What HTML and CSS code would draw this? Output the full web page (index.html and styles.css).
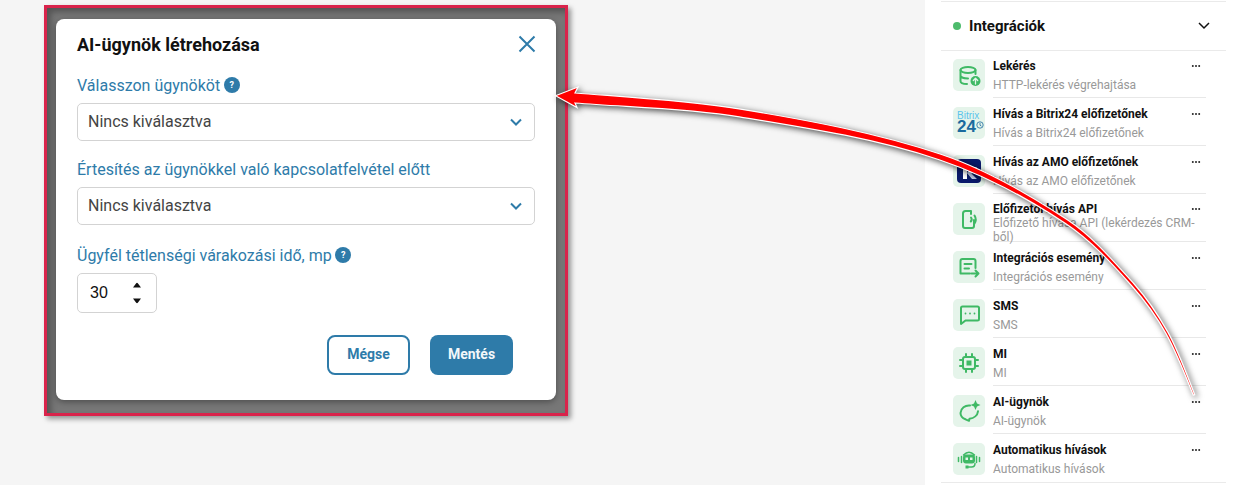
FILE: index.html
```html
<!DOCTYPE html>
<html lang="hu">
<head>
    <meta charset="UTF-8">
    <meta name="viewport" content="width=device-width, initial-scale=1.0">
    <title>AI-ügynök létrehozása</title>
    <link rel="stylesheet" href="styles.css">
</head>
<body>
    <div class="page">
        <main class="main">
            <div class="frame">
                <div class="modal">
                    <div class="modal-head">
                        <h2>AI-ügynök létrehozása</h2>
                        <svg class="close" viewBox="0 0 18 18"><path d="M1.5 1.5l15 15M16.5 1.5l-15 15"/></svg>
                    </div>
                    <div class="label label-first">Válasszon ügynököt <span class="help">?</span></div>
                    <div class="select">
                        <span>Nincs kiválasztva</span>
                        <svg class="select-arrow" viewBox="0 0 12 8"><path d="M1 1.5l5 5 5-5"/></svg>
                    </div>
                    <div class="label">Értesítés az ügynökkel való kapcsolatfelvétel előtt</div>
                    <div class="select">
                        <span>Nincs kiválasztva</span>
                        <svg class="select-arrow" viewBox="0 0 12 8"><path d="M1 1.5l5 5 5-5"/></svg>
                    </div>
                    <div class="label label-third">Ügyfél tétlenségi várakozási idő, mp <span class="help">?</span></div>
                    <div class="number">
                        <span>30</span>
                        <svg class="spin" viewBox="0 0 10 24"><path d="M1 6.500h8L5.800 2.200q-.8-.8-1.600 0zM1 17.500h8l-3.200 4.300q-.8.8-1.600 0z"/></svg>
                    </div>
                    <div class="buttons">
                        <button class="btn btn-outline">Mégse</button>
                        <button class="btn btn-fill">Mentés</button>
                    </div>
                </div>
            </div>
        </main>

        <aside class="panel">
            <div class="section">
                <div class="section-head">
                    <span class="dot"></span>
                    <span class="section-title">Integrációk</span>
                    <svg class="section-arrow" viewBox="0 0 12 8"><path d="M1 1l5 5 5-5"/></svg>
                </div>
                <div class="list">
                    <div class="row">
                        <div class="tile">
                            <svg class="ico" viewBox="0 0 32 32"><ellipse cx="15" cy="11" rx="7.500" ry="3"/><path d="M7.500 11v11c0 1.800 3 3 6.500 3M7.500 16.500c0 1.800 3.500 3 7.500 3M22.500 11v4"/><circle class="solid" cx="22.500" cy="22" r="5"/><path class="inv" d="M22.500 25v-5.500M20.300 21.500l2.200-2.200 2.200 2.200"/></svg>
                        </div>
                        <div class="row-body">
                            <div class="row-title"><span>Lekérés</span><i class="more"></i></div>
                            <div class="row-sub"><span>HTTP-lekérés végrehajtása</span></div>
                        </div>
                    </div>
                    <div class="row">
                        <div class="tile tile-bitrix">
                            <span class="bx-name">Bitrix</span>
                            <span class="bx-num">24<svg class="bx-clock" viewBox="0 0 8 8"><circle cx="4" cy="4" r="3.200"/><path d="M4 2v2.200l1.500 1"/></svg></span>
                        </div>
                        <div class="row-body">
                            <div class="row-title"><span>Hívás a Bitrix24 előfizetőnek</span><i class="more"></i></div>
                            <div class="row-sub"><span>Hívás a Bitrix24 előfizetőnek</span></div>
                        </div>
                    </div>
                    <div class="row">
                        <div class="tile">
                            <svg class="amo" viewBox="0 0 32 32"><rect x="4" y="4" width="24" height="24" rx="4" fill="#0a1a6b"/><path d="M10 13h4v11h-4z" fill="#fff"/><path d="M14 18l5-6h5l-5.500 6.500L24 24h-5z" fill="#c9d6f2"/></svg>
                        </div>
                        <div class="row-body">
                            <div class="row-title"><span>Hívás az AMO előfizetőnek</span><i class="more"></i></div>
                            <div class="row-sub"><span>Hívás az AMO előfizetőnek</span></div>
                        </div>
                    </div>
                    <div class="row">
                        <div class="tile">
                            <svg class="ico" viewBox="0 0 32 32"><path d="M12.500 8H18v3M21 17v6a2 2 0 0 1-2 2h-7a2 2 0 0 1-2-2V10.500A2.500 2.500 0 0 1 12.500 8"/><path d="M18 14.500q1.500 2-.2 4M21.500 12.500q2.500 4 0 8"/></svg>
                        </div>
                        <div class="row-body">
                            <div class="row-title"><span>Előfizetői hívás API</span><i class="more"></i></div>
                            <div class="row-sub"><span>Előfizető hívása API (lekérdezés CRM-ből)</span></div>
                        </div>
                    </div>
                    <div class="row">
                        <div class="tile">
                            <svg class="ico" viewBox="0 0 32 32"><path d="M17 22.500H7.500V10a2 2 0 0 1 2-2h11a2 2 0 0 1 2 2v7"/><path d="M11.500 13h7M11.500 17.500h4.500M18.500 22.500h7M22.500 19.500l3 3-3 3"/></svg>
                        </div>
                        <div class="row-body">
                            <div class="row-title"><span>Integrációs esemény</span><i class="more"></i></div>
                            <div class="row-sub"><span>Integrációs esemény</span></div>
                        </div>
                    </div>
                    <div class="row">
                        <div class="tile">
                            <svg class="ico" viewBox="0 0 32 32"><path d="M8 25V9a1.500 1.500 0 0 1 1.500-1.500h15A1.500 1.500 0 0 1 26 9v11a1.500 1.500 0 0 1-1.500 1.500H12.500L8 25z"/><path class="dots" d="M12.500 14.500h.01M17 14.500h.01M21.500 14.500h.01"/></svg>
                        </div>
                        <div class="row-body">
                            <div class="row-title"><span>SMS</span><i class="more"></i></div>
                            <div class="row-sub"><span>SMS</span></div>
                        </div>
                    </div>
                    <div class="row">
                        <div class="tile">
                            <svg class="ico" viewBox="0 0 32 32"><rect x="10" y="10" width="12" height="12" rx="2"/><rect class="solid" x="13.500" y="13.500" width="5" height="5"/><path d="M13 7v3M19 7v3M13 22v3M19 22v3M7 13h3M7 19h3M22 13h3M22 19h3"/></svg>
                        </div>
                        <div class="row-body">
                            <div class="row-title"><span>MI</span><i class="more"></i></div>
                            <div class="row-sub"><span>MI</span></div>
                        </div>
                    </div>
                    <div class="row">
                        <div class="tile">
                            <svg class="ico" viewBox="0 0 32 32"><path d="M17 10.500A8.500 8 0 0 0 7.500 18c0 3 2.500 5.300 5 6.300l3.500 1.500.5-2c4.500-.5 8-3.500 8.500-7.500"/><path class="solid" d="M22.500 5l1.500 3.500 3.500 1.500-3.500 1.500-1.500 3.500-1.500-3.500-3.500-1.500 3.500-1.500z"/></svg>
                        </div>
                        <div class="row-body">
                            <div class="row-title"><span>AI-ügynök</span><i class="more"></i></div>
                            <div class="row-sub"><span>AI-ügynök</span></div>
                        </div>
                    </div>
                    <div class="row">
                        <div class="tile">
                            <svg class="ico ico-thin" viewBox="0 0 32 32"><path d="M10.500 12q5.500-5.500 11 0M8.500 13.500v6M5.500 14.500v4M23.500 13.500v6M26.500 14.500v4M22 20.500q0 3.500-3.500 3.500H15"/><rect class="solid" x="10" y="11.500" width="12" height="9" rx="3"/><path class="eyes" d="M12.500 14.500h2.500v2.500h-2.500zM17 14.500h2.500v2.500H17z"/><path class="solid" d="M12.500 22.500h3v3h-3z"/></svg>
                        </div>
                        <div class="row-body">
                            <div class="row-title"><span>Automatikus hívások</span><i class="more"></i></div>
                            <div class="row-sub"><span>Automatikus hívások</span></div>
                        </div>
                    </div>
                </div>
            </div>
        </aside>

        <svg class="arrow" viewBox="0 0 1242 485">
            <path d="M555.500 95.700L578 87L575 93C628.800 97.300 687.300 100.500 740.600 109.200C807.700 120.100 876.400 132.800 940.900 154.300C986.500 169.500 1028.100 193.800 1068.100 220.300C1093.100 236.900 1113.900 261.800 1134.200 284C1147.600 299 1158.200 315 1168 332.400C1178.700 351.700 1186.600 374.200 1194.700 394.700L1193.300 395.300C1185.200 374.800 1176.700 352.900 1166 333.600C1156.300 316.100 1145.200 301 1131.800 286C1111.900 263.600 1090.900 240.300 1065.900 223.700C1025.900 197.200 984.700 174.900 939.100 159.700C874.600 138.200 806.500 127.700 739.400 116.800C686.100 108.100 628.800 107.300 575 103L577 107.500Z"/>
        </svg>
    </div>
</body>
</html>
```

FILE: styles.css
```css
* {
    box-sizing: border-box;
}
html, body {
    margin: 0;
    height: 485px;
    overflow: hidden;
}
body {
    font-family: Roboto, "Liberation Sans", sans-serif;
    background-color: #f5f5f5;
}
.page {
    position: relative;
    display: flex;
    height: 485px;
}
.main {
    flex: 1;
    padding: 5px 0 0 44px;
}
.frame {
    width: 524px;
    height: 411px;
    padding: 11px 9px 13px;
    background-color: #777;
    border: 3px solid #d9234b;
    box-shadow: 3px 3px 5px rgba(0, 0, 0, 0.4), inset 4px 4px 6px rgba(0, 0, 0, 0.3);
}
.modal {
    height: 381px;
    padding: 13px 20px 0 21px;
    background-color: #fff;
    border-radius: 8px;
    box-shadow: 0 2px 6px rgba(0, 0, 0, 0.35);
}
.modal-head {
    display: flex;
    justify-content: space-between;
    align-items: center;
    height: 24px;
}
.modal-head h2 {
    margin: 0;
    font-size: 18px;
    font-weight: 700;
    color: #111;
}
.close {
    width: 18px;
    height: 18px;
    fill: none;
    stroke: #2e7ba9;
    stroke-width: 2;
}
.label {
    display: flex;
    align-items: center;
    gap: 3.500px;
    height: 20px;
    margin: 18px 0 8px;
    font-size: 16px;
    color: #2e7ba9;
}
.label-first {
    margin-top: 19px;
}
.label-third {
    margin-top: 20px;
}
.help {
    width: 16px;
    height: 16px;
    border-radius: 50%;
    background-color: #2e7ba9;
    color: #fff;
    font-size: 9px;
    font-weight: 700;
    line-height: 16px;
    text-align: center;
}
.select {
    display: flex;
    justify-content: space-between;
    align-items: center;
    width: 458px;
    height: 38px;
    padding: 0 12px 2px 10px;
    border: 1px solid #d3d3d3;
    border-radius: 5px;
    font-size: 16px;
    color: #444;
}
.select-arrow {
    width: 12px;
    height: 8px;
    margin-top: 2px;
    fill: none;
    stroke: #2e7ba9;
    stroke-width: 2;
}
.number {
    display: flex;
    justify-content: space-between;
    align-items: center;
    width: 80px;
    height: 40px;
    padding: 0 14px 0 12px;
    border: 1px solid #d3d3d3;
    border-radius: 5px;
    font-family: "Liberation Sans", Arial, sans-serif;
    font-size: 16px;
    color: #111;
}
.spin {
    width: 10px;
    height: 24px;
    fill: #111;
}
.buttons {
    display: flex;
    justify-content: flex-end;
    gap: 20px;
    margin: 22px 23px 0 0;
}
.btn {
    width: 83px;
    height: 40px;
    padding: 0 0 2px;
    border-radius: 8px;
    font-family: inherit;
    font-size: 14px;
    font-weight: 700;
}
.btn-outline {
    background-color: #fff;
    border: 2px solid #2e7ba9;
    color: #2e7ba9;
}
.btn-fill {
    background-color: #2e7ba9;
    border: none;
    color: #f2f7fa;
}

.panel {
    width: 317px;
    padding: 1px 16px 0;
    background-color: #fff;
}
.section {
    height: 482px;
    border-top: 1px solid #eaeaea;
    border-bottom: 1px solid #eaeaea;
}
.section-head {
    display: flex;
    align-items: center;
    height: 49px;
    padding: 0 16px 0 12px;
    border-bottom: 1px solid #eaeaea;
}
.dot {
    width: 8px;
    height: 8px;
    margin-right: 8px;
    border-radius: 50%;
    background-color: #4dbb6c;
}
.section-title {
    flex: 1;
    font-size: 15px;
    font-weight: 700;
    color: #111;
}
.section-arrow {
    width: 12px;
    height: 8px;
    fill: none;
    stroke: #111;
    stroke-width: 1.500;
}
.list {
    margin-top: -1px;
}
.row {
    display: flex;
    height: 48px;
    padding: 0 20px 0 12px;
}
.tile {
    flex: none;
    width: 32px;
    height: 32px;
    margin: 9px 8px 0 0;
    border-radius: 5px;
    background-color: #e5f4ea;
}
.ico {
    display: block;
    width: 32px;
    height: 32px;
    fill: none;
    stroke: #3fb965;
    stroke-width: 2;
    stroke-linecap: round;
    stroke-linejoin: round;
}
.ico-thin {
    stroke-width: 1.500;
}
.ico .solid {
    fill: #3fb965;
    stroke: none;
}
.ico .eyes {
    fill: #e5f4ea;
    stroke: none;
}
.ico .inv {
    stroke: #e5f4ea;
    stroke-width: 1.300;
}
.ico .dots {
    stroke-width: 1.800;
}
.amo {
    display: block;
    width: 32px;
    height: 32px;
}
.tile-bitrix {
    display: flex;
    flex-direction: column;
    padding: 4px 0 0 4px;
    font-family: "Liberation Sans", Arial, sans-serif;
}
.bx-name {
    font-size: 10px;
    line-height: 10px;
    color: #5bc4ec;
}
.bx-num {
    display: flex;
    font-size: 17px;
    font-weight: 700;
    line-height: 12px;
    color: #1b6a9e;
}
.bx-clock {
    width: 8px;
    height: 8px;
    fill: none;
    stroke: #1b6a9e;
    stroke-width: 0.800;
}
.row-body {
    flex: 1;
    display: flex;
    flex-direction: column;
    padding: 8px 0 2px;
    border-bottom: 1px solid #e8e8e8;
}
.row:last-child .row-body {
    border-bottom: none;
}
.row-title {
    display: flex;
    justify-content: space-between;
    align-items: center;
    height: 16px;
    font-size: 12px;
    font-weight: 700;
    color: #111;
}
.more {
    width: 2.500px;
    height: 2.500px;
    margin-right: 9px;
    border-radius: 50%;
    background-color: #222;
    box-shadow: -3.200px 0 0 #222, 3.200px 0 0 #222;
}
.row-sub {
    flex: 1;
    display: flex;
    align-items: center;
    font-size: 12px;
    line-height: 14px;
    color: #999;
}
.arrow {
    position: absolute;
    top: 0;
    left: 0;
    width: 1242px;
    height: 485px;
    pointer-events: none;
    overflow: visible;
    filter: drop-shadow(2px 2px 3px rgba(0, 0, 0, 0.7));
}
.arrow path {
    fill: #ff0000;
    stroke: #fff;
    stroke-width: 1.200;
}
```
